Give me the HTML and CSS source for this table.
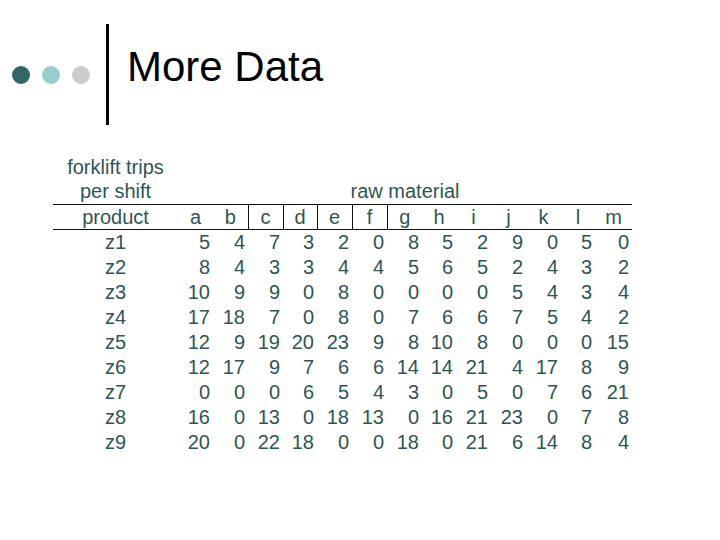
FILE: index.html
```html
<!DOCTYPE html>
<html>
<head>
<meta charset="utf-8">
<link rel="stylesheet" href="styles.css">
</head>
<body>
<div class="header">
  <div class="dots">
    <span class="dot dot-dark"></span>
    <span class="dot dot-light"></span>
    <span class="dot dot-grey"></span>
  </div>
  <div class="bar"></div>
  <h1 class="title">More Data</h1>
</div>
<table class="data">
  <colgroup>
    <col class="c-label"><col class="c35"><col class="c35"><col class="c35"><col class="c34"><col class="c35"><col class="c35"><col class="c35"><col class="c34"><col class="c35"><col class="c35"><col class="c35"><col class="c34"><col class="c37">
  </colgroup>
  <tr class="first"><td class="label">forklift trips</td><td colspan="13"></td></tr>
  <tr><td class="label">per shift</td><td colspan="13" class="group">raw material</td></tr>
  <tr class="head">
    <td class="label">product</td>
    <td>a</td><td>b</td><td class="sep">c</td><td class="sep">d</td><td class="sep">e</td><td class="sep">f</td><td class="sep">g</td><td>h</td><td>i</td><td>j</td><td>k</td><td>l</td><td>m</td>
  </tr>
  <tr><td class="label">z1</td><td class="n">5</td><td class="n">4</td><td class="n">7</td><td class="n">3</td><td class="n">2</td><td class="n">0</td><td class="n">8</td><td class="n">5</td><td class="n">2</td><td class="n">9</td><td class="n">0</td><td class="n">5</td><td class="n">0</td></tr>
  <tr><td class="label">z2</td><td class="n">8</td><td class="n">4</td><td class="n">3</td><td class="n">3</td><td class="n">4</td><td class="n">4</td><td class="n">5</td><td class="n">6</td><td class="n">5</td><td class="n">2</td><td class="n">4</td><td class="n">3</td><td class="n">2</td></tr>
  <tr><td class="label">z3</td><td class="n">10</td><td class="n">9</td><td class="n">9</td><td class="n">0</td><td class="n">8</td><td class="n">0</td><td class="n">0</td><td class="n">0</td><td class="n">0</td><td class="n">5</td><td class="n">4</td><td class="n">3</td><td class="n">4</td></tr>
  <tr><td class="label">z4</td><td class="n">17</td><td class="n">18</td><td class="n">7</td><td class="n">0</td><td class="n">8</td><td class="n">0</td><td class="n">7</td><td class="n">6</td><td class="n">6</td><td class="n">7</td><td class="n">5</td><td class="n">4</td><td class="n">2</td></tr>
  <tr><td class="label">z5</td><td class="n">12</td><td class="n">9</td><td class="n">19</td><td class="n">20</td><td class="n">23</td><td class="n">9</td><td class="n">8</td><td class="n">10</td><td class="n">8</td><td class="n">0</td><td class="n">0</td><td class="n">0</td><td class="n">15</td></tr>
  <tr><td class="label">z6</td><td class="n">12</td><td class="n">17</td><td class="n">9</td><td class="n">7</td><td class="n">6</td><td class="n">6</td><td class="n">14</td><td class="n">14</td><td class="n">21</td><td class="n">4</td><td class="n">17</td><td class="n">8</td><td class="n">9</td></tr>
  <tr><td class="label">z7</td><td class="n">0</td><td class="n">0</td><td class="n">0</td><td class="n">6</td><td class="n">5</td><td class="n">4</td><td class="n">3</td><td class="n">0</td><td class="n">5</td><td class="n">0</td><td class="n">7</td><td class="n">6</td><td class="n">21</td></tr>
  <tr><td class="label">z8</td><td class="n">16</td><td class="n">0</td><td class="n">13</td><td class="n">0</td><td class="n">18</td><td class="n">13</td><td class="n">0</td><td class="n">16</td><td class="n">21</td><td class="n">23</td><td class="n">0</td><td class="n">7</td><td class="n">8</td></tr>
  <tr><td class="label">z9</td><td class="n">20</td><td class="n">0</td><td class="n">22</td><td class="n">18</td><td class="n">0</td><td class="n">0</td><td class="n">18</td><td class="n">0</td><td class="n">21</td><td class="n">6</td><td class="n">14</td><td class="n">8</td><td class="n">4</td></tr>
</table>
</body>
</html>
```

FILE: styles.css
```css
html, body {
  margin: 0;
  padding: 0;
  background: #ffffff;
}

body {
  width: 720px;
  height: 540px;
  overflow: hidden;
  font-family: "Liberation Sans", Arial, sans-serif;
}

.header {
  display: flex;
  align-items: flex-start;
  padding: 24px 0 0 12px;
  height: 101px;
}

.dots {
  display: flex;
  gap: 12px;
  align-self: center;
}

.dot {
  display: block;
  width: 18px;
  height: 18px;
  border-radius: 50%;
}

.dot-dark { background: #336666; }
.dot-light { background: #99cccc; }
.dot-grey { background: #cccccc; }

.bar {
  width: 3px;
  height: 101px;
  background: #000000;
  margin-left: 16px;
}

.title {
  margin: 22px 0 0 18px;
  font-size: 42px;
  line-height: 42px;
  font-weight: normal;
  color: #000000;
}

.data {
  margin: 29px 0 0 53px;
  border-collapse: collapse;
  table-layout: fixed;
  width: 579px;
  font-size: 20px;
  color: #2f5555;
}

.c-label { width: 125px; }
.c35 { width: 35px; }
.c34 { width: 34px; }
.c37 { width: 37px; }

.data td {
  height: 25px;
  padding: 0;
  line-height: 25px;
  white-space: nowrap;
}

.data .first td {
  padding-top: 2px;
  height: 23px;
  line-height: 23px;
}

.data .label {
  text-align: center;
}

.data .group {
  text-align: center;
}

.head td {
  border-top: 1px solid #111111;
  border-bottom: 1px solid #111111;
  text-align: center;
  height: 24px;
  line-height: 24px;
}

.head td.sep {
  border-left: 1px solid #111111;
}

.data td.n {
  text-align: right;
  padding-right: 3px;
}
```
